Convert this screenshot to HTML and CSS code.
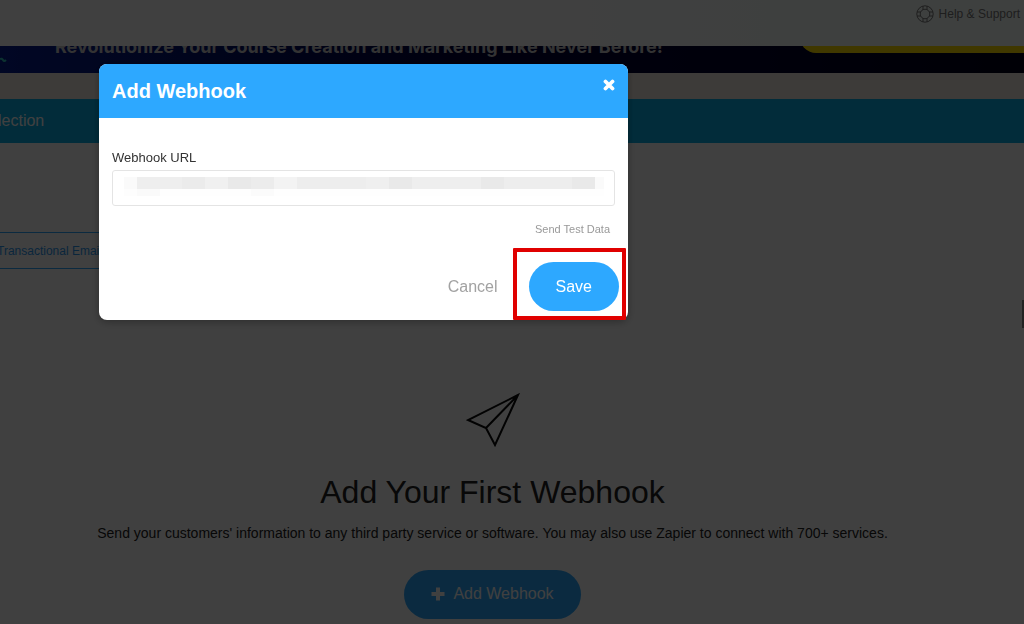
FILE: index.html
```html
<!DOCTYPE html>
<html lang="en">
<head>
<meta charset="utf-8">
<meta name="viewport" content="width=device-width, initial-scale=1">
<title>Add Webhook</title>
<link rel="stylesheet" href="styles.css">
</head>
<body>
<div class="page">
  <header class="topbar">
    <a class="help" href="#help">
      <svg class="help-icon" viewBox="0 0 18 18" aria-hidden="true">
        <g fill="none" stroke="currentColor">
          <circle cx="9" cy="9" r="8.2"/>
          <circle cx="9" cy="9" r="4.8"/>
          <path d="M7 1.2v3.5M11 1.2v3.5M7 13.3v3.5M11 13.3v3.5M1.2 7h3.5M1.2 11h3.5M13.3 7h3.5M13.3 11h3.5"/>
        </g>
      </svg>
      Help &amp; Support
    </a>
  </header>
  <div class="banner">
    <svg class="banner-mark" viewBox="0 0 8 6" aria-hidden="true"><path d="M0 2q2-1 3 1t3 0" fill="none" stroke="#30c8c0" stroke-width="2"/></svg>
    <p class="banner-text">Revolutionize Your Course Creation and Marketing Like Never Before!</p>
    <div class="banner-cta"></div>
  </div>
  <div class="strip"></div>
  <nav class="nav"><a href="#collection">lection</a></nav>
  <main class="main">
    <div class="tabs"><button class="tab" type="button">Transactional Emails</button></div>
    <section class="empty">
      <svg class="plane" viewBox="0 0 54 54" aria-hidden="true">
        <path d="M52 2L2 27l18 8 9 17zM52 2L20 35" fill="none" stroke="#080808" stroke-width="2"/>
      </svg>
      <h1>Add Your First Webhook</h1>
      <p>Send your customers' information to any third party service or software. You may also use Zapier to connect with 700+ services.</p>
      <button class="pill add" type="button">
        <svg class="plus" viewBox="0 0 14 14" aria-hidden="true"><path d="M7 0.5v13M0.5 7h13" stroke="currentColor" stroke-width="4" fill="none"/></svg>
        Add Webhook
      </button>
    </section>
  </main>
  <div class="side-tab"></div>
</div>
<div class="overlay">
  <form class="modal" role="dialog" aria-labelledby="modal-title">
    <div class="modal-head">
      <h2 id="modal-title">Add Webhook</h2>
      <button class="close" type="button" aria-label="Close">
        <svg viewBox="0 0 12 12" aria-hidden="true"><path d="M2.5 2.5l7 7M9.5 2.5l-7 7" stroke="currentColor" stroke-width="3.8" stroke-linecap="round"/></svg>
      </button>
    </div>
    <div class="modal-body">
      <label for="url">Webhook URL</label>
      <input id="url" class="url" type="text">
      <a class="test" href="#test">Send Test Data</a>
      <div class="actions">
        <button class="cancel" type="button">Cancel</button>
        <div class="save-wrap"><button class="pill save" type="button">Save</button></div>
      </div>
    </div>
  </form>
</div>
</body>
</html>
```
FILE: styles.css
```css
* { box-sizing: border-box; }
body { margin: 0; font-family: "Liberation Sans", Arial, sans-serif; color: #333; }
h1, h2, p { margin: 0; }
a { color: inherit; text-decoration: none; }
button { border: 0; padding: 0; background: none; font-family: inherit; cursor: pointer; }
svg { display: block; }

.page { position: relative; height: 100vh; overflow: hidden; background: #fff; }
.topbar { display: flex; justify-content: flex-end; height: 46px; padding: 5px 4px 0 0; background: linear-gradient(90deg, #fff 50%, #f8fffc 75%); }
.help { display: flex; align-items: center; gap: 5px; height: 18px; font-size: 12px; color: #777; }
.help-icon { width: 18px; height: 18px; }

.banner { display: flex; align-items: flex-start; height: 27px; overflow: hidden; background: linear-gradient(90deg, #041c90 0, #041880 10%, #000038 45%, #00002c 75%, #000018 100%); }
.banner-mark { width: 8px; height: 6px; margin-top: 11px; }
.banner-text { flex: 1; margin: -10px 0 0 47px; font: 700 18px/22px Inter, sans-serif; white-space: nowrap; color: #ccc; }
.banner-cta { height: 32px; margin: -25px -60px 0 0; flex: 0 0 284px; border-radius: 16px; background: #ffe000; }

.strip { height: 26px; background: #f4ece4; }
.nav { display: flex; align-items: center; height: 44px; background: #08b0e8; color: #fff; font-size: 16px; }
.nav a { margin-left: -2px; }

.main { padding-top: 89px; }
.tabs { display: flex; }
.tab { height: 37px; margin-left: -4px; padding: 0 16px 0 0; border: 1px solid #2da8ff; font-size: 12px; color: #2d98ef; }
.empty { display: flex; flex-direction: column; align-items: center; padding: 124px 39px 0 0; text-align: center; color: #222; }
.plane { width: 54px; height: 54px; }
.empty h1 { margin-top: 27px; font-size: 32px; line-height: 36px; font-weight: 400; }
.empty p { margin-top: 13px; font-size: 14px; line-height: 20px; }
.pill { height: 49px; border-radius: 25px; background: #2da8ff; color: #fff; font-size: 16px; }
.add { display: flex; align-items: center; gap: 8px; margin-top: 27px; padding: 0 27px 2px; }
.plus { width: 14px; height: 14px; }
.side-tab { position: absolute; top: 300px; right: 0; width: 2px; height: 28px; background: #888; }

.overlay { position: fixed; inset: 0; display: flex; align-items: flex-start; padding: 64px 99px; background: rgba(0, 0, 0, .75); }
.modal { width: 100%; max-width: 529px; border-radius: 8px; background: #fff; box-shadow: 0 2px 8px rgba(0, 0, 0, .3); }
.modal-head { display: flex; justify-content: space-between; height: 54px; padding: 15px 13px 0; border-radius: 8px 8px 0 0; background: #2da8ff; color: #fff; }
.modal-head h2 { font-size: 20px; line-height: 24px; }
.close { align-self: flex-start; color: #fff; }
.close svg { width: 12px; height: 12px; }
.modal-body { display: flex; flex-direction: column; padding: 32px 9px 9px 13px; }
.modal-body label { font-size: 13px; line-height: 16px; }
.url {
  height: 36px; margin: 4px 4px 0 0; padding: 0 12px; border: 1px solid #e4e4e4; border-radius: 3px; font-size: 14px;
  background:
    linear-gradient(90deg, #fafafa 13px, #eee 13px 58px, #ebebeb 58px 81px, #f0f0f0 81px 104px, #e9e9e9 104px 127px, #ececec 127px 150px, #f3f3f3 150px 173px, #ededed 173px 242px, #efefef 242px 265px, #e9e9e9 265px 288px, #eee 288px 357px, #e9e9e9 357px 380px, #ededed 380px 448px, #e9e9e9 448px 471px, #fafafa 471px) 11px 6px / 480px 12px no-repeat,
    linear-gradient(90deg, #fdfdfd 13px, #fafafa 13px 36px, #fefefe 36px 127px, #fbfbfb 127px 150px, #fefefe 150px) 11px 18px / 480px 7px no-repeat,
    #fff;
}
.test { align-self: flex-end; margin: 15px 9px 0 0; font-size: 11px; line-height: 16px; color: #999; }
.actions { display: flex; justify-content: flex-end; align-items: center; gap: 31px; margin-top: 25px; }
.cancel { font-size: 16px; color: #a2a2a2; }
.save-wrap { position: relative; }
.save-wrap::after { content: ""; position: absolute; inset: -14px -7px -9px -16px; border: 4px solid #e00000; border-radius: 1px; pointer-events: none; }
.save { display: block; padding: 0 27px; }
```
